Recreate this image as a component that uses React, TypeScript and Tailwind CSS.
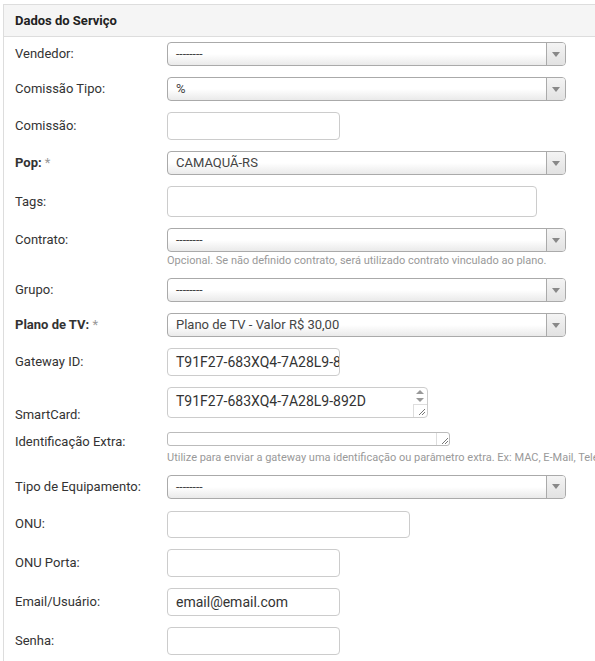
import React from 'react';

const font = { fontFamily: 'Roboto, "Liberation Sans", Arial, sans-serif' };

const Label: React.FC<{ text: string; required?: boolean }> = ({ text, required }) => (
  <div className="w-[152px] shrink-0 text-[13px] text-[#333]">
    {required ? (
      <span>
        <span className="font-bold">{text}</span> <span className="text-[#999]">*</span>
      </span>
    ) : (
      text
    )}
  </div>
);

const Select: React.FC<{ value: string }> = ({ value }) => (
  <div className="flex h-[24px] w-[399px] shrink-0 overflow-hidden rounded-[4px] border border-[#aaa] bg-gradient-to-b from-white from-50% to-[#eaeaea]">
    <div className="flex flex-1 items-center pl-[8px] text-[13px] text-[#444]">
      {value === '' ? <span className="text-[12px]">--------</span> : value}
    </div>
    <div className="flex w-[19px] items-center justify-center border-l border-[#aaa] bg-gradient-to-b from-[#f4f4f4] to-[#e2e2e2]">
      <svg width="8" height="5" viewBox="0 0 8 5">
        <path d="M0 0 L8 0 L4 5 Z" fill="#888" />
      </svg>
    </div>
  </div>
);

const Input: React.FC<{ w: string; h?: string; value?: string }> = ({ w, h = 'h-[28px]', value }) => (
  <div
    className={`${w} ${h} shrink-0 overflow-hidden whitespace-nowrap rounded-[4px] border border-[#ccc] bg-white pl-[8px] text-[14px] leading-[26px] text-[#333]`}
  >
    {value}
  </div>
);

const Grip: React.FC = () => (
  <svg width="9" height="9" viewBox="0 0 9 9">
    <path d="M8 2 L2 8 M8 5 L5 8" stroke="#777" strokeWidth="1" />
  </svg>
);

const Help: React.FC<{ text: string; mt?: string }> = ({ text, mt = 'mt-[2px]' }) => (
  <div className={`ml-[152px] ${mt} whitespace-nowrap text-[11px] leading-[13px] text-[#999]`}>{text}</div>
);

export default function App() {
  return (
    <div className="min-h-[661px] overflow-hidden bg-white pl-[3px] pt-[4px]" style={font}>
      <div className="border-l border-t border-[#ddd] pb-[10px]">
        {/* Header */}
        <div className="flex h-[32px] items-center border-b border-[#ddd] bg-[#f5f5f5] pl-[11px] text-[13px] font-bold text-[#222]">
          Dados do Serviço
        </div>

        <div className="pl-[11px]">
          <div className="mt-[5px] flex items-center">
            <Label text="Vendedor:" />
            <Select value="" />
          </div>

          <div className="mt-[11px] flex items-center">
            <Label text="Comissão Tipo:" />
            <Select value="%" />
          </div>

          <div className="mt-[11px] flex items-center">
            <Label text="Comissão:" />
            <Input w="w-[173px]" />
          </div>

          <div className="mt-[11px] flex items-center">
            <Label text="Pop:" required />
            <Select value="CAMAQUÃ-RS" />
          </div>

          <div className="mt-[11px] flex items-center">
            <Label text="Tags:" />
            <Input w="w-[370px]" h="h-[31px]" />
          </div>

          {/* Contrato */}
          <div className="mt-[11px]">
            <div className="flex items-center">
              <Label text="Contrato:" />
              <Select value="" />
            </div>
            <Help text="Opcional. Se não definido contrato, será utilizado contrato vinculado ao plano." />
          </div>

          <div className="mt-[11px] flex items-center">
            <Label text="Grupo:" />
            <Select value="" />
          </div>

          <div className="mt-[11px] flex items-center">
            <Label text="Plano de TV:" required />
            <Select value="Plano de TV - Valor R$ 30,00" />
          </div>

          <div className="mt-[11px] flex items-center">
            <Label text="Gateway ID:" />
            <Input w="w-[173px]" value="T91F27-683XQ4-7A28L9-892D" />
          </div>

          {/* SmartCard */}
          <div className="mt-[11px] flex items-end">
            <div className="mb-[-6px]">
              <Label text="SmartCard:" />
            </div>
            <div className="flex h-[31px] w-[261px] shrink-0 overflow-hidden rounded-[4px] border border-[#ccc] bg-white">
              <div className="flex-1 whitespace-nowrap pl-[8px] pt-[4px] text-[14px] leading-[18px] text-[#333]">
                T91F27-683XQ4-7A28L9-892D
              </div>
              <div className="flex w-[14px] flex-col items-center">
                <svg width="10" height="14" viewBox="0 0 10 14" className="mt-[1px]">
                  <path d="M1 5 L5 1 L9 5 Z" fill="#999" />
                  <path d="M1 9 L9 9 L5 13 Z" fill="#999" />
                </svg>
                <div className="mt-auto flex h-[13px] w-[14px] items-end justify-end border-l border-t border-[#ddd] pb-[1px] pr-[1px]">
                  <Grip />
                </div>
              </div>
            </div>
          </div>

          {/* Identificação Extra */}
          <div className="mt-[11px]">
            <div className="flex items-start">
              <div className="mt-[3px]">
                <Label text="Identificação Extra:" />
              </div>
              <div className="mt-[3px] flex h-[14px] w-[283px] shrink-0 items-end justify-end rounded-[3px] border border-[#bbb] bg-white">
                <div className="flex h-[12px] w-[13px] items-end justify-end border-l border-[#ddd]">
                  <Grip />
                </div>
              </div>
            </div>
            <Help
              mt="mt-[-1px]"
              text="Utilize para enviar a gateway uma identificação ou parâmetro extra. Ex: MAC, E-Mail, Telefone"
            />
          </div>

          <div className="mt-[11px] flex items-center">
            <Label text="Tipo de Equipamento:" />
            <Select value="" />
          </div>

          <div className="mt-[12px] flex items-center">
            <Label text="ONU:" />
            <Input w="w-[243px]" h="h-[27px]" />
          </div>

          <div className="mt-[11px] flex items-center">
            <Label text="ONU Porta:" />
            <Input w="w-[173px]" />
          </div>

          <div className="mt-[11px] flex items-center">
            <Label text="Email/Usuário:" />
            <Input w="w-[173px]" value="email@email.com" />
          </div>

          <div className="mt-[11px] flex items-center">
            <Label text="Senha:" />
            <Input w="w-[173px]" />
          </div>
        </div>
      </div>
    </div>
  );
}
